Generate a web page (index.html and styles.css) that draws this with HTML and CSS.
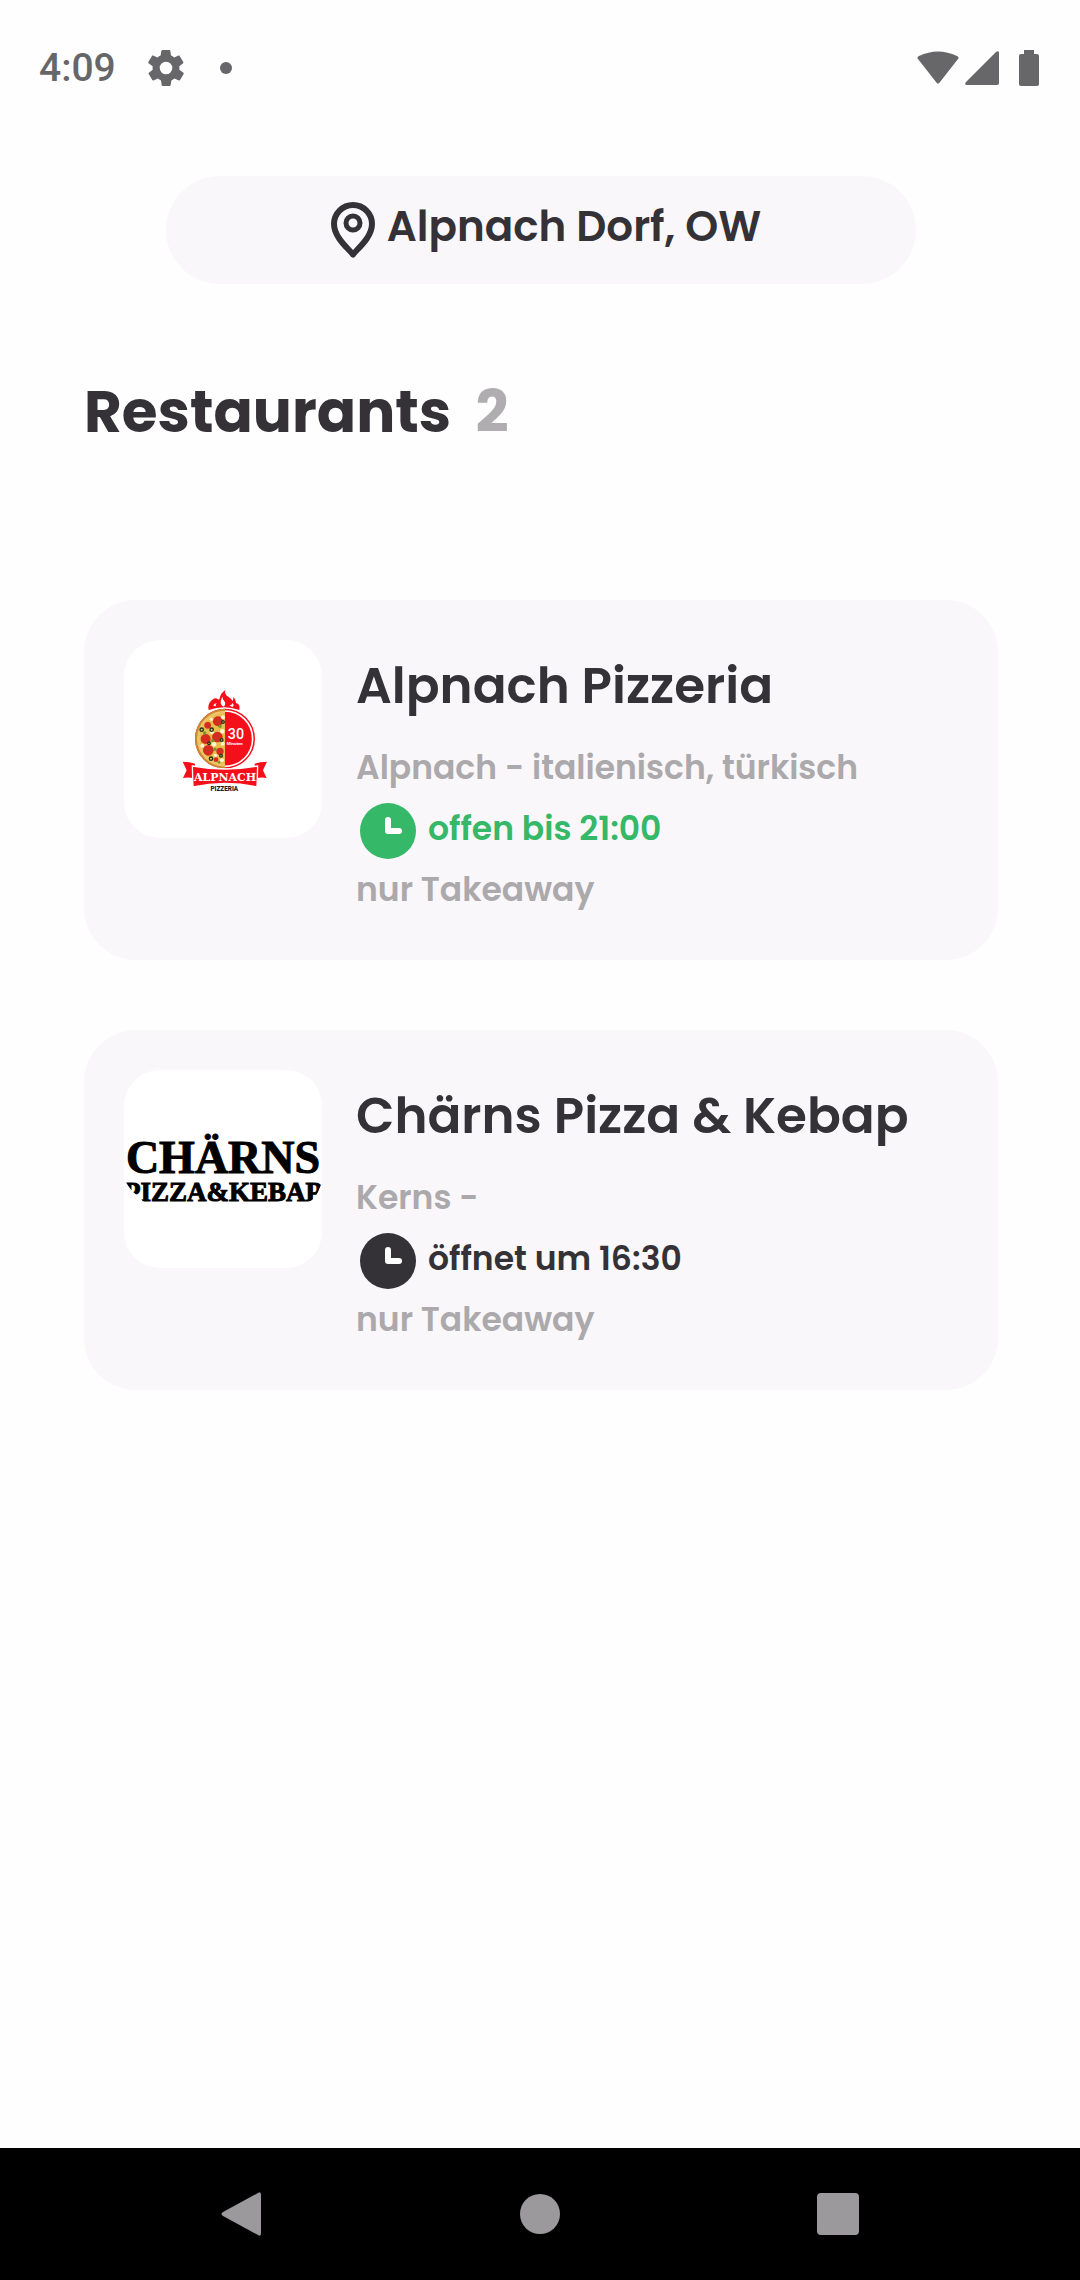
FILE: index.html
```html
<!DOCTYPE html>
<html lang="de">
  <head>
    <meta charset="UTF-8" />
    <meta name="viewport" content="width=device-width, initial-scale=1.0" />
    <title>Restaurants</title>
    <link rel="stylesheet" href="styles.css">
  </head>
  <body>
    <div class="status-bar">
      <span class="time">4:09</span>
      <svg class="gear" viewBox="2 2 20 20" width="36" height="36">
        <path fill-rule="evenodd" d="M19.4 13a7.500 7.500 0 0 0 0-2l2.100-1.600c.2-.2.200-.4.100-.7l-2-3.400c-.1-.2-.4-.3-.6-.2l-2.500 1a7.300 7.300 0 0 0-1.700-1l-.4-2.600c0-.3-.2-.5-.5-.5h-4c-.2 0-.4.200-.5.500l-.4 2.600c-.6.2-1.200.6-1.700 1l-2.500-1c-.2-.1-.5 0-.6.200l-2 3.400c-.1.200-.1.500.1.700L4.600 11a7.500 7.500 0 0 0 0 2l-2.100 1.600c-.2.200-.3.500-.1.700l2 3.400c.1.200.4.300.6.200l2.500-1c.5.400 1.100.8 1.700 1l.4 2.600c0 .3.200.5.500.5h4c.2 0 .4-.2.500-.5l.4-2.600c.6-.2 1.200-.6 1.700-1l2.500 1c.2.100.5 0 .6-.2l2-3.400c.1-.2.100-.5-.1-.7zM12 15.500a3.500 3.500 0 1 1 0-7 3.500 3.500 0 0 1 0 7z" />
      </svg>
      <span class="dot"></span>
      <div class="signals">
        <svg viewBox="0 0 42 34" width="42" height="34">
          <path d="M1 8Q-.5 6 2 5Q21-4 40 5Q42.500 6 41 8L23 31Q21 34 19 31Z" />
        </svg>
        <svg viewBox="0 0 34 34" width="34" height="34">
          <path d="M31 1Q34-1 34 2V32Q34 34 32 34H2Q-1 34 1 31Z" />
        </svg>
        <svg class="battery" viewBox="0 0 20 36" width="20" height="36">
          <path d="M5 0H15V4H18Q20 4 20 6V34Q20 36 18 36H2Q0 36 0 34V6Q0 4 2 4H5Z" />
        </svg>
      </div>
    </div>

    <main class="container">
      <button type="button" class="location">
        <svg viewBox="0 0 44 56" width="44" height="56" fill="none" stroke="#343236">
          <path stroke-width="6" stroke-linejoin="round" d="M22 52.500C19 48 3 36 3 22A19 19 0 0 1 41 22C41 36 25 48 22 52.500Z" />
          <circle cx="22" cy="21" r="7" stroke-width="5" />
        </svg>
        <span>Alpnach Dorf, OW</span>
      </button>

      <h1>Restaurants <span class="count">2</span></h1>

      <a class="card" href="#">
        <svg class="logo" viewBox="0 0 198 198">
          <g transform="translate(41 31) scale(.3333)">
            <path fill="#f50f1b" d="M131 117Q126 98 142 86Q151 79 158 84Q163 88 164 82Q167 66 181 57Q177 70 190 77Q200 84 203 90Q207 82 204 78Q212 83 213 96Q227 99 223 117Q179 101 131 117Z" />
            <path fill="#fff" d="M173 77Q172 86 178 91Q184 98 177 107Q166 103 167 92Q168 83 173 77ZM193 103Q204 100 202 95Q210 103 202 108ZM145 104Q146 98 155 96Q150 102 153 106Z" />
            <circle cx="180" cy="203" r="90" fill="#f50f1b" />
            <path fill="#c98a32" d="M180 113A90 90 0 0 0 180 293Z" />
            <path fill="#f1c46b" d="M180 119A84 84 0 0 0 180 287Z" />
            <path fill="#e8bd4b" d="M180 127A76 76 0 0 0 180 279Z" />
            <g fill="#d52c22">
              <circle cx="159" cy="151" r="15" />
              <circle cx="128" cy="163" r="10" />
              <circle cx="122" cy="204" r="15" />
              <circle cx="157" cy="198" r="16" />
              <circle cx="130" cy="238" r="16" />
              <circle cx="165" cy="241" r="11" />
              <circle cx="153" cy="266" r="7" />
            </g>
            <g fill="#fff4d3">
              <circle cx="174" cy="139" r="6" />
              <circle cx="139" cy="145" r="5" />
              <circle cx="141" cy="184" r="6" />
              <circle cx="172" cy="181" r="7" />
              <circle cx="112" cy="224" r="6" />
              <circle cx="147" cy="220" r="7" />
              <circle cx="173" cy="218" r="6" />
              <circle cx="151" cy="253" r="5" />
              <circle cx="171" cy="268" r="6" />
            </g>
            <g fill="#6f9a30">
              <circle cx="119" cy="186" r="5" />
              <circle cx="165" cy="166" r="5" />
              <circle cx="143" cy="209" r="5" />
              <circle cx="150" cy="235" r="5" />
              <circle cx="162" cy="274" r="4" />
            </g>
            <g fill="#e8bd4b" stroke="#24331c" stroke-width="4">
              <circle cx="110" cy="176" r="5" />
              <circle cx="140" cy="176" r="5" />
              <circle cx="174" cy="153" r="4" />
              <circle cx="132" cy="217" r="4" />
              <circle cx="170" cy="207" r="4" />
              <circle cx="138" cy="263" r="5" />
              <circle cx="168" cy="254" r="4" />
            </g>
            <path d="M180 120A83 83 0 0 1 180 286" fill="none" stroke="#fff" stroke-width="5" />
            <text class="minutes" x="213" y="205">30</text>
            <text class="minutes-label" x="209" y="223">Minuten</text>
            <path fill="#f50f1b" d="M53 272Q75 272 90 278V289L81 292L88 322Q68 318 54 321L65 298ZM306 272Q284 272 269 278V289L278 292L271 322Q291 318 305 321L294 298Z" />
            <path fill="#f50f1b" stroke="#fff" stroke-width="4" d="M82 285Q180 303 278 285L276 348Q180 327 84 348Z" />
            <text class="ribbon" x="180" y="329">ALPNACH</text>
            <text class="ribbon-sub" x="178" y="360">PIZZERIA</text>
          </g>
        </svg>
        <div class="info">
          <h2>Alpnach Pizzeria</h2>
          <p>Alpnach - italienisch, türkisch</p>
          <p class="hours open">
            <svg viewBox="0 0 56 56" width="56" height="56">
              <circle cx="28" cy="28" r="28" />
              <path d="M28 17V28H39" />
            </svg>
            offen bis 21:00
          </p>
          <p>nur Takeaway</p>
        </div>
      </a>

      <a class="card" href="#">
        <svg class="logo" viewBox="0 0 198 198">
          <clipPath id="plate">
            <path d="M0 0H198V112L194 122Q190 130 184 132H20L14 126Q6 120 2 112H0Z" />
          </clipPath>
          <g class="charns" clip-path="url(#plate)">
            <text class="charns-top" x="99" y="103">CHÄRNS</text>
            <text class="charns-bottom" x="99" y="131">PIZZA&amp;KEBAP</text>
          </g>
        </svg>
        <div class="info">
          <h2>Chärns Pizza &amp; Kebap</h2>
          <p>Kerns -</p>
          <p class="hours">
            <svg viewBox="0 0 56 56" width="56" height="56">
              <circle cx="28" cy="28" r="28" />
              <path d="M28 17V28H39" />
            </svg>
            öffnet um 16:30
          </p>
          <p>nur Takeaway</p>
        </div>
      </a>
    </main>

    <nav class="nav-bar">
      <button type="button" aria-label="Back">
        <svg viewBox="0 0 44 44" width="44" height="44"><path d="M38 1Q41-1 41 3V41Q41 45 38 43L3 24Q0 22 3 20Z" /></svg>
      </button>
      <button type="button" aria-label="Home">
        <svg viewBox="0 0 44 44" width="44" height="44"><circle cx="22" cy="22" r="20" /></svg>
      </button>
      <button type="button" aria-label="Overview">
        <svg viewBox="0 0 44 44" width="44" height="44"><rect x="1" y="1" width="42" height="42" rx="4" /></svg>
      </button>
    </nav>
  </body>
</html>
```
FILE: styles.css
```css
* {
  box-sizing: border-box;
}

body {
  margin: 0;
  min-height: 100vh;
  display: flex;
  flex-direction: column;
  font-family: Poppins, Inter, sans-serif;
  background-color: #fefefe;
  color: #343236;
}

.status-bar {
  display: flex;
  align-items: center;
  height: 136px;
  padding: 0 41px 0 39px;
  color: #676668;
  fill: #676668;
}

.time {
  font-family: Roboto, sans-serif;
  font-size: 39px;
  font-weight: 500;
}

.gear {
  margin-left: 32px;
}

.dot {
  width: 12px;
  height: 12px;
  margin-left: 36px;
  border-radius: 50%;
  background-color: #676668;
}

.signals {
  display: flex;
  align-items: center;
  gap: 6px;
  margin-left: auto;
}

.battery {
  margin-left: 14px;
}

.container {
  flex: 1;
  padding: 40px 82px 40px 84px;
}

.location {
  display: flex;
  justify-content: center;
  align-items: center;
  gap: 12px;
  width: 82%;
  height: 108px;
  margin: 0 auto;
  padding: 0 0 0 10px;
  border: none;
  border-radius: 54px;
  background-color: #f9f7fa;
  color: inherit;
  font-family: inherit;
  font-size: 42px;
  font-weight: 600;
  cursor: pointer;
}

.location span {
  padding-bottom: 8px;
}

h1 {
  margin: 86px 0 146px;
  font-size: 58px;
  line-height: 84px;
  font-weight: 700;
}

.count {
  margin-left: 12px;
  color: #afadb0;
}

.card {
  display: flex;
  gap: 34px;
  margin-bottom: 70px;
  padding: 40px;
  border-radius: 52px;
  background-color: #f9f7fa;
  color: inherit;
  text-decoration: none;
}

.logo {
  flex: none;
  width: 198px;
  height: 198px;
  border-radius: 36px;
  background-color: #fff;
}

.info {
  padding-top: 12px;
}

h2 {
  margin: 0 0 17px;
  font-size: 50px;
  line-height: 68px;
  font-weight: 600;
}

.info p {
  margin: 0;
  font-size: 33px;
  line-height: 61px;
  font-weight: 600;
  color: #aba9ac;
}

.info .hours {
  display: flex;
  align-items: center;
  gap: 12px;
  padding-left: 4px;
  color: #343236;
}

.info .open {
  color: #35b868;
}

.hours svg {
  margin-top: 5px;
}

.hours circle {
  fill: currentColor;
}

.hours path {
  fill: none;
  stroke: #fff;
  stroke-width: 6;
  stroke-linecap: round;
  stroke-linejoin: round;
}

/* logo lettering */
.logo text {
  text-anchor: middle;
}

.minutes {
  font: 500 43px Roboto, sans-serif;
  fill: #fff;
}

.minutes-label {
  font: 700 13px Roboto, sans-serif;
  fill: #fff;
}

.ribbon {
  font: 700 33px "DejaVu Serif", serif;
  fill: #fff;
}

.ribbon-sub {
  font: 900 19px Roboto, sans-serif;
  fill: #222;
}

.charns {
  font-family: "Liberation Serif", serif;
  font-weight: bold;
  stroke: #000;
}

.charns-top {
  font-size: 46px;
}

.charns-bottom {
  font-size: 27px;
}

.nav-bar {
  display: flex;
  justify-content: center;
  gap: 254px;
  padding: 44px 0;
  background-color: #000;
}

.nav-bar button {
  display: flex;
  padding: 0;
  border: none;
  background: none;
  fill: #9b999c;
  cursor: pointer;
}
```
